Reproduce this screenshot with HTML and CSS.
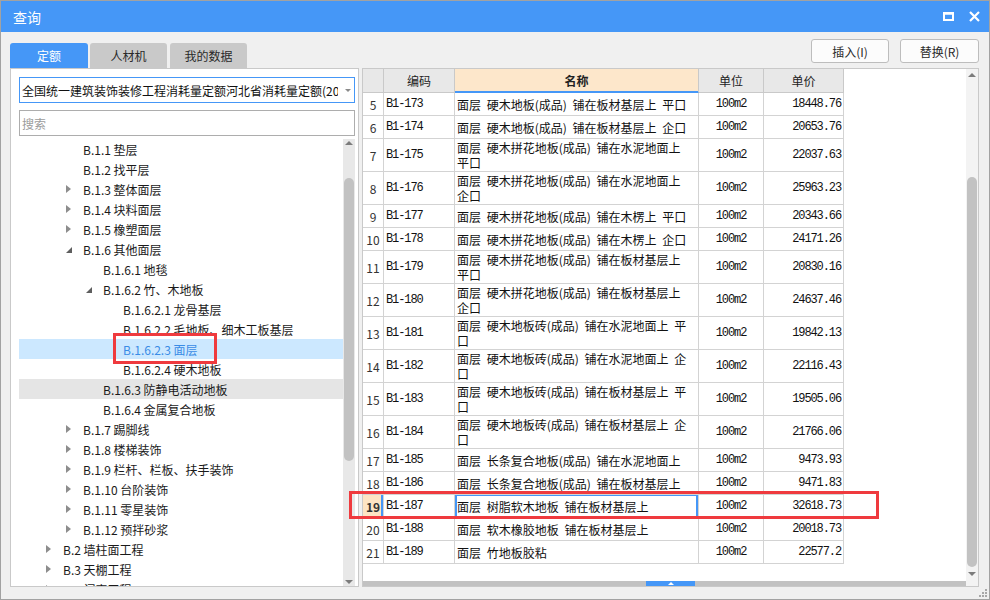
FILE: index.html
```html
<!DOCTYPE html>
<html lang="zh-CN">
<head>
<meta charset="utf-8">
<title>查询</title>
<link rel="stylesheet" href="styles.css">
</head>
<body>
<div class="window">
  <div class="titlebar">
    <span class="title">查询</span>
    <div class="title-actions">
      <svg class="ico-max" width="12" height="10" viewBox="0 0 12 10"><rect x="1" y="1.5" width="9" height="6.5" fill="none" stroke="#fff" stroke-width="2"/><rect x="0" y="0" width="11" height="2.5" fill="#fff"/></svg>
      <svg class="ico-close" width="11" height="11" viewBox="0 0 11 11"><path d="M1 1L10 10M10 1L1 10" stroke="#fff" stroke-width="2.2"/></svg>
    </div>
  </div>

  <div class="main">
    <div class="leftcol">
      <div class="tabs">
        <div class="tab active">定额</div>
        <div class="tab">人材机</div>
        <div class="tab">我的数据</div>
      </div>
      <div class="lpanel">
        <div class="select">
          <span class="select-text">全国统一建筑装饰装修工程消耗量定额河北省消耗量定额(2012)</span>
          <span class="select-arrow"></span>
        </div>
        <div class="search">搜索</div>
        <div class="tree">
          <div class="tree-rows">
            <div class="node lv3"><span class="tw"></span>B.1.1 垫层</div>
            <div class="node lv3"><span class="tw"></span>B.1.2 找平层</div>
            <div class="node lv3"><span class="tw c"></span>B.1.3 整体面层</div>
            <div class="node lv3"><span class="tw c"></span>B.1.4 块料面层</div>
            <div class="node lv3"><span class="tw c"></span>B.1.5 橡塑面层</div>
            <div class="node lv3"><span class="tw e"></span>B.1.6 其他面层</div>
            <div class="node lv4"><span class="tw"></span>B.1.6.1 地毯</div>
            <div class="node lv4"><span class="tw e"></span>B.1.6.2 竹、木地板</div>
            <div class="node lv5"><span class="tw"></span>B.1.6.2.1 龙骨基层</div>
            <div class="node lv5"><span class="tw"></span>B.1.6.2.2 毛地板、细木工板基层</div>
            <div class="node lv5 sel"><span class="tw"></span>B.1.6.2.3 面层<span class="mark"></span></div>
            <div class="node lv5"><span class="tw"></span>B.1.6.2.4 硬木地板</div>
            <div class="node lv4 hov"><span class="tw"></span>B.1.6.3 防静电活动地板</div>
            <div class="node lv4"><span class="tw"></span>B.1.6.4 金属复合地板</div>
            <div class="node lv3"><span class="tw c"></span>B.1.7 踢脚线</div>
            <div class="node lv3"><span class="tw c"></span>B.1.8 楼梯装饰</div>
            <div class="node lv3"><span class="tw c"></span>B.1.9 栏杆、栏板、扶手装饰</div>
            <div class="node lv3"><span class="tw c"></span>B.1.10 台阶装饰</div>
            <div class="node lv3"><span class="tw c"></span>B.1.11 零星装饰</div>
            <div class="node lv3"><span class="tw c"></span>B.1.12 预拌砂浆</div>
            <div class="node lv2"><span class="tw c"></span>B.2 墙柱面工程</div>
            <div class="node lv2"><span class="tw c"></span>B.3 天棚工程</div>
            <div class="node lv2"><span class="tw c"></span>B.4 门窗工程</div>
          </div>
          <div class="vs vs-tree">
            <span class="arr up"></span>
            <span class="thumb"></span>
            <span class="arr dn"></span>
          </div>
        </div>
      </div>
    </div>

    <div class="rightcol">
      <div class="btnrow">
        <div class="btn">插入(I)</div>
        <div class="btn btn-r">替换(R)</div>
      </div>
      <div class="rpanel">
        <div class="gridwrap">
          <table class="grid">
            <colgroup><col class="c-no"><col class="c-code"><col class="c-name"><col class="c-unit"><col class="c-price"></colgroup>
            <thead>
              <tr><th></th><th>编码</th><th class="hl">名称</th><th>单位</th><th>单价</th></tr>
            </thead>
            <tbody>
              <tr class="s"><td class="no">5</td><td class="code">B1-173</td><td class="name">面层 硬木地板(成品) 铺在板材基层上 平口</td><td class="unit">100m2</td><td class="price">18448.76</td></tr>
              <tr class="s"><td class="no">6</td><td class="code">B1-174</td><td class="name">面层 硬木地板(成品) 铺在板材基层上 企口</td><td class="unit">100m2</td><td class="price">20653.76</td></tr>
              <tr class="d"><td class="no">7</td><td class="code">B1-175</td><td class="name">面层 硬木拼花地板(成品) 铺在水泥地面上<br>平口</td><td class="unit">100m2</td><td class="price">22037.63</td></tr>
              <tr class="d"><td class="no">8</td><td class="code">B1-176</td><td class="name">面层 硬木拼花地板(成品) 铺在水泥地面上<br>企口</td><td class="unit">100m2</td><td class="price">25963.23</td></tr>
              <tr class="s"><td class="no">9</td><td class="code">B1-177</td><td class="name">面层 硬木拼花地板(成品) 铺在木楞上 平口</td><td class="unit">100m2</td><td class="price">20343.66</td></tr>
              <tr class="s"><td class="no">10</td><td class="code">B1-178</td><td class="name">面层 硬木拼花地板(成品) 铺在木楞上 企口</td><td class="unit">100m2</td><td class="price">24171.26</td></tr>
              <tr class="d"><td class="no">11</td><td class="code">B1-179</td><td class="name">面层 硬木拼花地板(成品) 铺在板材基层上<br>平口</td><td class="unit">100m2</td><td class="price">20830.16</td></tr>
              <tr class="d"><td class="no">12</td><td class="code">B1-180</td><td class="name">面层 硬木拼花地板(成品) 铺在板材基层上<br>企口</td><td class="unit">100m2</td><td class="price">24637.46</td></tr>
              <tr class="d"><td class="no">13</td><td class="code">B1-181</td><td class="name">面层 硬木地板砖(成品) 铺在水泥地面上 平<br>口</td><td class="unit">100m2</td><td class="price">19842.13</td></tr>
              <tr class="d"><td class="no">14</td><td class="code">B1-182</td><td class="name">面层 硬木地板砖(成品) 铺在水泥地面上 企<br>口</td><td class="unit">100m2</td><td class="price">22116.43</td></tr>
              <tr class="d"><td class="no">15</td><td class="code">B1-183</td><td class="name">面层 硬木地板砖(成品) 铺在板材基层上 平<br>口</td><td class="unit">100m2</td><td class="price">19505.06</td></tr>
              <tr class="d"><td class="no">16</td><td class="code">B1-184</td><td class="name">面层 硬木地板砖(成品) 铺在板材基层上 企<br>口</td><td class="unit">100m2</td><td class="price">21766.06</td></tr>
              <tr class="s"><td class="no">17</td><td class="code">B1-185</td><td class="name">面层 长条复合地板(成品) 铺在水泥地面上</td><td class="unit">100m2</td><td class="price">9473.93</td></tr>
              <tr class="s"><td class="no">18</td><td class="code">B1-186</td><td class="name">面层 长条复合地板(成品) 铺在板材基层上</td><td class="unit">100m2</td><td class="price">9471.83</td></tr>
              <tr class="s cur"><td class="no">19</td><td class="code">B1-187</td><td class="name">面层 树脂软木地板 铺在板材基层上</td><td class="unit">100m2</td><td class="price">32618.73</td></tr>
              <tr class="s"><td class="no">20</td><td class="code">B1-188</td><td class="name">面层 软木橡胶地板 铺在板材基层上</td><td class="unit">100m2</td><td class="price">20018.73</td></tr>
              <tr class="s"><td class="no">21</td><td class="code">B1-189</td><td class="name">面层 竹地板胶粘</td><td class="unit">100m2</td><td class="price">22577.2</td></tr>
            </tbody>
          </table>
        </div>
        <div class="vs vs-grid">
          <span class="arr up"></span>
          <span class="thumb"></span>
          <span class="arr dn"></span>
        </div>
        <div class="hbar"><span class="hthumb"></span></div>
        <div class="corner"></div>
      </div>
    </div>
  </div>

  <div class="rowmark"></div>
  <svg class="grip" width="9" height="9" viewBox="0 0 9 9"><g fill="#a8a8a8"><rect x="7" y="1" width="2" height="2"/><rect x="4" y="4" width="2" height="2"/><rect x="7" y="4" width="2" height="2"/><rect x="1" y="7" width="2" height="2"/><rect x="4" y="7" width="2" height="2"/><rect x="7" y="7" width="2" height="2"/></g></svg>
</div>
</body>
</html>
```

FILE: styles.css
```css
* { box-sizing: border-box; }

body {
  margin: 0;
  background: #f0f0f0;
}

.window {
  position: relative;
  width: 990px;
  height: 600px;
  border: 1px solid #a2a2a2;
  background: #f0f0f0;
  display: flex;
  flex-direction: column;
  font-family: "Noto Sans CJK SC", "Noto Sans", sans-serif;
  font-size: 12px;
  color: #1a1a1a;
  overflow: hidden;
}

/* title bar */
.titlebar {
  flex: none;
  height: 31px;
  background: #4597f7;
  color: #fff;
  display: flex;
  align-items: center;
  padding: 0 9px 0 12px;
}
.title { font-size: 14px; line-height: 1; }
.title-actions {
  margin-left: auto;
  display: flex;
  align-items: center;
  gap: 14px;
}

/* main area */
.main {
  flex: 1;
  display: flex;
  gap: 3px;
  padding: 0 10px 0 9px;
}

.leftcol {
  width: 349px;
  display: flex;
  flex-direction: column;
}

.tabs {
  display: flex;
  margin-top: 11px;
  height: 25px;
}
.tab {
  width: 77px;
  margin-right: 3px;
  display: flex;
  align-items: center;
  justify-content: center;
  background: #c9c9c9;
  color: #2a2a2a;
  border-radius: 3px 3px 0 0;
}
.tab.active {
  width: 78px;
  margin-right: 2px;
  background: #4597f7;
  color: #fff;
}

.lpanel {
  height: 519px;
  border: 1px solid #c9c9c9;
  background: #fff;
  padding: 8px 3px 0 8px;
  display: flex;
  flex-direction: column;
}

.select {
  flex: none;
  height: 26px;
  border: 1px solid #4597f7;
  display: flex;
  align-items: center;
  padding-left: 2px;
}
.select-text {
  width: 316px;
  overflow: hidden;
  white-space: nowrap;
  color: #111;
}
.select-arrow {
  margin-left: 7px;
  width: 0;
  height: 0;
  border-left: 3px solid transparent;
  border-right: 3px solid transparent;
  border-top: 3px solid #8a8a8a;
}

.search {
  flex: none;
  height: 26px;
  margin-top: 7px;
  border: 1px solid #adadad;
  padding-left: 2px;
  display: flex;
  align-items: center;
  color: #9c9c9c;
}

.tree {
  flex: 1;
  min-height: 0;
  margin-top: 3px;
  display: flex;
}
.tree-rows {
  flex: 1;
  overflow: hidden;
}
.node {
  position: relative;
  height: 20px;
  display: flex;
  align-items: center;
  white-space: nowrap;
}
.lv2 { padding-left: 27px; }
.lv3 { padding-left: 47px; }
.lv4 { padding-left: 67px; }
.lv5 { padding-left: 87px; }
.tw {
  flex: none;
  width: 17px;
  height: 20px;
  display: flex;
  align-items: center;
}
.tw.c::before {
  content: "";
  width: 0;
  height: 0;
  border-top: 4px solid transparent;
  border-bottom: 4px solid transparent;
  border-left: 5px solid #8d8d8d;
}
.tw.e::before {
  content: "";
  width: 0;
  height: 0;
  margin-top: 2px;
  border-top: 6px solid transparent;
  border-right: 6px solid #5e5e5e;
}
.node.sel {
  background: #cce8ff;
  color: #3a8ce6;
}
.node.hov {
  background: #e5e5e5;
}
.mark {
  position: absolute;
  left: 94px;
  top: -6px;
  width: 104px;
  height: 31px;
  border: 3px solid #ef3a3e;
}

/* scrollbars */
.vs {
  flex: none;
  width: 12px;
  display: flex;
  flex-direction: column;
  align-items: center;
}
.vs-tree {
  background: #e8e8e8;
  padding: 2px 0;
}
.vs-tree .thumb { margin-top: 33px; height: 283px; }
.vs-tree .arr.dn { margin-top: auto; }

.arr {
  width: 0;
  height: 0;
  border-left: 4px solid transparent;
  border-right: 4px solid transparent;
}
.arr.up { border-bottom: 4px solid #7c7c7c; }
.arr.dn { border-top: 4px solid #7c7c7c; }
.thumb {
  width: 10px;
  background: #c2c2c2;
  border-radius: 5px;
}

.rightcol {
  width: 617px;
  display: flex;
  flex-direction: column;
}
.btnrow {
  display: flex;
  justify-content: flex-end;
  gap: 11px;
  margin-top: 7px;
  margin-bottom: 5px;
  height: 24px;
}
.btn {
  width: 78px;
  height: 24px;
  border: 1px solid #bdbdbd;
  border-radius: 3px;
  background: #fcfcfc;
  color: #2a2a2a;
  display: flex;
  align-items: center;
  justify-content: center;
}
.btn-r { width: 79px; }

.rpanel {
  height: 519px;
  border: 1px solid #c9c9c9;
  background: #fff;
  display: grid;
  grid-template-columns: 1fr 12px;
  grid-template-rows: 1fr 5px;
}
.gridwrap {
  overflow: hidden;
}
.vs-grid {
  background: #f3f3f3;
  padding-top: 4px;
}
.vs-grid .thumb { margin-top: 100px; height: 390px; }
.vs-grid .arr.dn { margin-top: 5px; }

.hbar {
  background: #c2c2c2;
  display: flex;
}
.hthumb {
  margin-left: 283px;
  width: 49px;
  background: #4597f7;
  display: flex;
  align-items: center;
  justify-content: center;
}
.hthumb::after {
  content: "";
  width: 0;
  height: 0;
  border-left: 3px solid transparent;
  border-right: 3px solid transparent;
  border-bottom: 3px solid #fff;
}
.corner { background: #f3f3f3; }

/* grid table */
.grid {
  table-layout: fixed;
  border-collapse: separate;
  border-spacing: 0;
  width: 481px;
}
.c-no { width: 21px; }
.c-code { width: 71px; }
.c-name { width: 244px; }
.c-unit { width: 65px; }
.c-price { width: 80px; }

.grid th,
.grid td {
  border-right: 1px solid #d3d3d3;
  border-bottom: 1px solid #d3d3d3;
  padding: 0 2px;
  white-space: nowrap;
  overflow: hidden;
  vertical-align: middle;
}
.grid thead tr { height: 24px; }
.grid th {
  background: #e8e8e8;
  font-weight: normal;
  text-align: center;
  border-color: #c9c9c9;
  color: #222;
}
.grid th.hl {
  background: #fde7cb;
  font-weight: bold;
  border-bottom: 1px solid #4597f7;
  box-shadow: inset 0 -1px 0 #4597f7;
}
.grid tr.s { height: 23px; }
.grid tr.d { height: 33px; }

.no {
  text-align: center;
  padding: 0 !important;
  color: #333;
}
.code, .unit, .price {
  font-family: "Liberation Mono", monospace;
  font-size: 12px;
  letter-spacing: -1.1px;
  color: #111;
}
.unit { text-align: center; }
.price { text-align: right; }
.name {
  line-height: 15px;
  word-spacing: 3px;
  color: #111;
}

tr.cur .no {
  background: #fde4c4;
  font-weight: bold;
  box-shadow: inset -2px 0 0 #4597f7;
}
tr.cur .name {
  box-shadow: inset 2px 0 0 #4597f7, inset -2px 0 0 #4597f7, inset 0 1px 0 #4597f7, inset 0 -1px 0 #4597f7;
}

/* annotations */
.rowmark {
  position: absolute;
  left: 348px;
  top: 490px;
  width: 530px;
  height: 28px;
  border: 3px solid #ef3a3e;
}
.grip {
  position: absolute;
  right: 2px;
  bottom: 2px;
}
```
